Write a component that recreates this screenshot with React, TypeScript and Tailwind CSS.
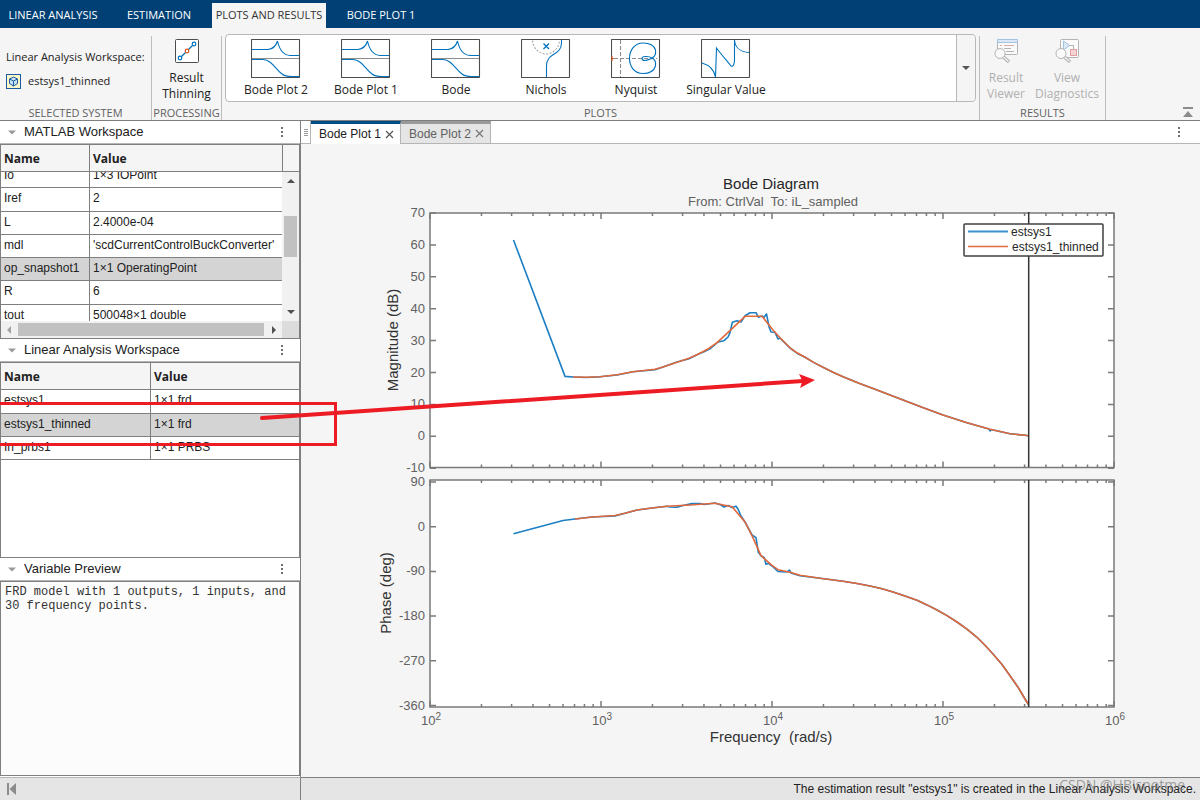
import type { ReactNode } from "react";

type Row = { name: string; value: string; tall?: boolean; selected?: boolean };

const matlabRows: Row[] = [
  { name: "Io", value: "1×3 IOPoint" },
  { name: "Iref", value: "2", tall: true },
  { name: "L", value: "2.4000e-04" },
  { name: "mdl", value: "'scdCurrentControlBuckConverter'" },
  { name: "op_snapshot1", value: "1×1 OperatingPoint", selected: true },
  { name: "R", value: "6", tall: true },
  { name: "tout", value: "500048×1 double" },
];

const linearRows: Row[] = [
  { name: "estsys1", value: "1×1 frd", tall: true },
  { name: "estsys1_thinned", value: "1×1 frd", selected: true },
  { name: "In_prbs1", value: "1×1 PRBS" },
];

const ribbonTabs = [
  { label: "LINEAR ANALYSIS", width: "w-[106px]" },
  { label: "ESTIMATION", width: "w-[106px]" },
  { label: "PLOTS AND RESULTS", width: "w-[114px]", active: true },
  { label: "BODE PLOT 1", width: "w-[110px]" },
];

function Thumb({ children }: { children: ReactNode }) {
  return (
    <svg width="50" height="39" viewBox="0 0 50 39" fill="none" stroke="#0072bd" strokeWidth="1.1">
      <rect x="0.5" y="0.5" width="48" height="38" rx="0.5" fill="#fff" stroke="#4d4d4d" />
      {children}
    </svg>
  );
}

const bodeThumb = (
  <Thumb>
    <path d="M1 19.5H48" stroke="#8c8c8c" />
    <path d="M1 10.5H17C22 10 25 7 26.5 2C28 9 31 16 39 16.5H48" />
    <path d="M1 20.5H12C21 21 24 30 31 35C34 37.5 37 37.5 41 37.5H48" />
  </Thumb>
);

const gallery = [
  { label: "Bode Plot 2", icon: bodeThumb },
  { label: "Bode Plot 1", icon: bodeThumb },
  { label: "Bode", icon: bodeThumb },
  {
    label: "Nichols",
    icon: (
      <Thumb>
        <path d="M11.5 1.5C12 9 18 15 25 15C32 15 38 9 38.5 1.5" stroke="#a6a6a6" strokeDasharray="2 1.5" />
        <path d="M22.5 4.5L28 10M28 4.5L22.5 10" strokeWidth="1.3" />
        <path d="M40.5 1V4C40.5 17 25.5 13 25.5 27V38" />
      </Thumb>
    ),
  },
  {
    label: "Nyquist",
    icon: (
      <Thumb>
        <path d="M9.5 1V38" stroke="#8c8c8c" strokeDasharray="4 2" />
        <path d="M3 19.5H46" stroke="#8c8c8c" strokeDasharray="4 2" />
        <path d="M1 17V22M1 19.5H3" stroke="#d9541a" />
        <path d="M41 19C45 17 45 14 44.5 11C43 6 38 4 32 4C23 4 18.5 12 18.5 19.5C18.5 27 23 34.5 32 34.5C38 34.5 43 32 44.5 27C45 24 45 21 41 19C38 17 36 17.5 34 17.5C30 17.5 30 21.5 34 21.5C36 21.5 39 20 42 19" />
      </Thumb>
    ),
  },
  {
    label: "Singular Value",
    icon: (
      <Thumb>
        <path d="M1 24C8 26 13 30 14.5 38L15.5 9C19 14 26 22 30 27C32 28 33 26 33.5 22V1C34 8 39 13 48 13.5" />
      </Thumb>
    ),
  },
];

function Magnifier() {
  return (
    <>
      <path d="M9.5 18L15 23" stroke="#b3b3b3" strokeWidth="3.5" />
      <path d="M9.5 18L14.5 22.5" stroke="#f5f5f5" strokeWidth="1.2" />
      <circle cx="6" cy="14.5" r="5" fill="#fafafa" stroke="#b3b3b3" />
    </>
  );
}

function Section({ label, className, children }: { label: string; className: string; children: ReactNode }) {
  return (
    <section className={`mt-2 flex h-[84px] flex-col border-r border-[#bdbdbd] ${className}`}>
      <div className="h-[69px]">{children}</div>
      <h2 className="text-center text-[11px] leading-[15px] text-[#616161]">{label}</h2>
    </section>
  );
}

function Kebab() {
  return (
    <button aria-label="Panel actions" className="flex w-4 flex-col items-center gap-[2px]">
      <span className="size-[2px] bg-[#6e6e6e]" />
      <span className="size-[2px] bg-[#6e6e6e]" />
      <span className="size-[2px] bg-[#6e6e6e]" />
    </button>
  );
}

function PanelHeader({ title }: { title: string }) {
  return (
    <div className="flex h-[23px] shrink-0 items-center border-b border-[#b5b5b5] bg-white pr-[10px] pl-2">
      <svg width="8" height="5" viewBox="0 0 8 5" className="mr-2">
        <path d="M0 0.5H8L4 4.5Z" fill="#999" />
      </svg>
      <h2 className="flex-1 text-[13px] leading-4 text-[#212121]">{title}</h2>
      <Kebab />
    </div>
  );
}

function HeadTable({ nameWidth, children }: { nameWidth: string; children?: ReactNode }) {
  return (
    <table className="w-full table-fixed border-separate border-spacing-0 text-left font-['Open_Sans',sans-serif] text-[12px] leading-4 text-[#212121]">
      <thead>
        <tr className="h-[27px] bg-[#f5f5f5]">
          <th className={`border-r border-b border-[#7f7f7f] px-[3px] pt-[2px] pb-0 font-bold ${nameWidth}`}>Name</th>
          <th className="border-b border-[#7f7f7f] px-[3px] pt-[2px] pb-0 font-bold">Value</th>
          {children}
        </tr>
      </thead>
    </table>
  );
}

function BodyTable({ rows, nameWidth }: { rows: Row[]; nameWidth: string }) {
  return (
    <table className="w-full table-fixed border-separate border-spacing-0 bg-white text-[12px] leading-4 text-[#212121]">
      <tbody>
        {rows.map((r) => (
          <tr
            key={r.name}
            className={`align-top ${r.tall ? "h-6" : "h-[23px]"} ${r.selected ? "bg-[#d4d4d4]" : ""}`}
          >
            <td className={`border-r border-b border-[#7f7f7f] px-[3px] pt-[2px] pb-0 ${nameWidth}`}>{r.name}</td>
            <td className="border-b border-[#7f7f7f] px-[3px] pt-[2px] pb-0 whitespace-nowrap">{r.value}</td>
          </tr>
        ))}
      </tbody>
    </table>
  );
}

// chart geometry, in viewBox units
const LEFT = 129;
const RIGHT = 813;
const DECADE = 171;
const decades = [0, 1, 2, 3, 4];
const minorX = [0, 1, 2, 3].flatMap((d) =>
  [2, 3, 4, 5, 6, 7, 8, 9].map((m) => LEFT + DECADE * (d + Math.log10(m)))
);

const magTicks = [70, 60, 50, 40, 30, 20, 10, 0, -10].map((v) => ({ v, y: 69 + ((70 - v) / 10) * 31.9 }));
const phaseTicks = [90, 0, -90, -180, -270, -360].map((v) => ({ v, y: 338 + ((90 - v) / 90) * 44.7 }));

// the thinned result follows the full one everywhere past its last bump
const magTail =
  "504,213.3 513,218.6 522,223.3 532,228.2 542,232.7 558,239.3 574,245.3 604,256.7 623,264 642,271 666,278.7";
const phaseTail =
  "519,434.3 542,437.3 556,439.5 569,442 581,444.8 592,448 604,451.9 616,456.3 626,460.9 636,466 646,471.6 656,478 666,485.2 676,493.3 684,501.2 692,510 701,520.5 709,531.7 717,543.2 724,555 727.5,560.5";

const magThinned = `272,233 285,233.3 299,232.7 316,230.7 332,227.7 343,226.5 354,225.3 362,223 376,218.3 388,214.3 397,210.3 407,205 416,198.7 429,186.7 444,172.3 461,172.3 472,186 479,193.7 489,203.8 496,208.8 ${magTail} 689,285.3 709,289.7 724,291.3 727,291.7`;
const magFull = `212.5,96 264,232.4 272,233 285,233.5 299,232.7 316,231 332,227.7 354,225.7 362,223 376,218 388,214.7 397,210.3 403,207.7 409,204.8 417,198 423,196.7 427,193 429,188.7 431.3,178.3 436,176.7 440,178 444,171.7 449,168.7 455,168.7 457.5,173.3 461,172 463,173.3 465.5,170 468,182.7 470,188 474,188.3 477,195 479,194 489,204 496,209.2 ${magTail} 688,285 689,287 690,285.5 709,289.7 724,291.3 727.5,291.7`;
const phaseThinned = `274,375 291,373 314,371.5 324,369.3 336,366 351,364 366,362.3 389,361 414,359.3 431,362.7 444,378 451,391.7 460,411.7 471,421.3 477,425.7 489,428.3 499,431.3 ${phaseTail}`;
const phaseFull = `212.5,389.8 262,376.5 274,375 291,373 314,372 324,369.3 336,366 351,364 366,362.3 369,363 376,363.3 382,361.5 391,359.6 399,359.6 403,360.5 414,359 420,361 423,363 427,361.5 431,363.5 435,362.3 437,365 440,372 444,378 451,391 455,393.7 457.3,408.3 460,411.7 463.3,413.7 465,420.3 467.5,419.3 471,422 477,427.5 486,428 488.3,426 490,429 499,431.8 ${phaseTail}`;

function Axes({ top, bottom, ticks }: { top: number; bottom: number; ticks: { v: number; y: number }[] }) {
  return (
    <g stroke="#7a7a7a" strokeWidth="1.5" fill="none">
      <rect x={LEFT} y={top} width={RIGHT - LEFT} height={bottom - top} fill="#fff" stroke="none" />
      {ticks.map((t) => (
        <path key={t.v} d={`M${LEFT} ${t.y}h6M${RIGHT} ${t.y}h-6`} />
      ))}
      {decades.map((d) => (
        <path key={d} d={`M${LEFT + DECADE * d} ${top}v6M${LEFT + DECADE * d} ${bottom}v-6`} />
      ))}
      {minorX.map((x) => (
        <path key={x} d={`M${x} ${top}v3M${x} ${bottom}v-3`} />
      ))}
      <rect x={LEFT} y={top} width={RIGHT - LEFT} height={bottom - top} />
      <g fill="#616161" stroke="none" fontSize="13" textAnchor="end">
        {ticks.map((t) => (
          <text key={t.v} x="124" y={t.y + 4}>
            {t.v}
          </text>
        ))}
      </g>
    </g>
  );
}

function BodeChart() {
  return (
    <svg viewBox="0 0 899 633" className="size-full" role="img" aria-label="Bode Diagram">
      <text x="470" y="45" textAnchor="middle" fontSize="15" fill="#262626">
        Bode Diagram
      </text>
      <text x="472" y="62" textAnchor="middle" fontSize="13" fill="#616161" className="whitespace-pre">
        {"From: CtrlVal  To: iL_sampled"}
      </text>
      <Axes top={69} bottom={323.5} ticks={magTicks} />
      <Axes top={336} bottom={563} ticks={phaseTicks} />
      <g fill="none" strokeWidth="1.6" strokeLinejoin="round">
        <polyline points={magFull} stroke="#1c7fc4" />
        <polyline points={magThinned} stroke="#e0683a" />
        <polyline points={phaseFull} stroke="#1c7fc4" />
        <polyline points={phaseThinned} stroke="#e0683a" />
      </g>
      <path d="M727.7 68V323M727.7 336V563" stroke="#333" strokeWidth="1.5" />
      <rect x="663" y="80" width="139" height="32" rx="1" fill="#fff" stroke="#404040" strokeWidth="1.5" />
      <path d="M667 87.5H707" stroke="#3a92cf" strokeWidth="2" />
      <path d="M667 102.5H707" stroke="#e0683a" strokeWidth="1.5" />
      <g fontSize="12" fill="#262626">
        <text x="710" y="92">estsys1</text>
        <text x="711" y="107">estsys1_thinned</text>
      </g>
      <g fontSize="13" fill="#616161">
        {decades.map((d) => (
          <text key={d} x={LEFT - 9 + DECADE * d} y="581">
            10
            <tspan dy="-5" fontSize="10">
              {d + 2}
            </tspan>
          </text>
        ))}
      </g>
      <g fontSize="15" fill="#333" textAnchor="middle">
        <text x="470" y="598" className="whitespace-pre">
          {"Frequency  (rad/s)"}
        </text>
        <text transform="translate(97 196) rotate(-90)">Magnitude (dB)</text>
        <text transform="translate(90 449) rotate(-90)">Phase (deg)</text>
      </g>
    </svg>
  );
}

export default function App() {
  return (
    <div className="relative flex h-screen flex-col overflow-hidden bg-[#f5f5f5] font-['Liberation_Sans',Arial,sans-serif] text-[#212121]">
      <nav className="flex h-7 shrink-0 items-end bg-[#004074] font-['Open_Sans',sans-serif] text-[11px] leading-4">
        {ribbonTabs.map((t) => (
          <button
            key={t.label}
            className={`h-[25px] pb-[2px] whitespace-nowrap ${t.width} ${t.active ? "bg-[#f5f5f5] text-[#333]" : "text-white"}`}
          >
            {t.label}
          </button>
        ))}
      </nav>

      <div className="flex h-[93px] shrink-0 border-b border-[#7f7f7f] font-['Open_Sans',sans-serif] text-[12px] leading-4">
        <Section label="SELECTED SYSTEM" className="w-[152px] shrink-0">
          <div className="flex flex-col gap-2 pt-[13px] pl-[6px] text-[11px] text-[#212121]">
            <p className="whitespace-nowrap">Linear Analysis Workspace:</p>
            <div className="flex items-center gap-[7px]">
              <svg width="15" height="15" viewBox="0 0 15 15" fill="none" stroke="#1a5aa0">
                <rect x="0.5" y="0.5" width="14" height="14" fill="#fdf7c8" />
                <path d="M7.5 3L11.5 5V9.5L7.5 12L3.5 9.5V5Z" fill="#c9e2f7" />
                <path d="M3.5 5L7.5 7L11.5 5M7.5 7V12" />
              </svg>
              <span>estsys1_thinned</span>
            </div>
          </div>
        </Section>

        <Section label="PROCESSING" className="w-[70px] shrink-0">
          <button className="flex w-full flex-col items-center pt-[3px] text-[#212121]">
            <svg width="24" height="24" viewBox="0 0 24 24" fill="none" stroke="#0072bd" className="mb-[7px]">
              <rect x="0.5" y="0.5" width="23" height="23" rx="1" fill="#fff" stroke="#4d4d4d" />
              <path d="M6.5 17.5L10.5 13.5M13.5 10.5L17.5 6.5" strokeWidth="1.3" />
              <circle cx="5" cy="19" r="1.8" strokeWidth="1.2" />
              <circle cx="12" cy="12" r="1.8" stroke="#d9541a" strokeWidth="1.2" />
              <circle cx="19" cy="5" r="1.8" strokeWidth="1.2" />
            </svg>
            <span>Result</span>
            <span>Thinning</span>
          </button>
        </Section>

        <Section label="PLOTS" className="min-w-0 flex-1">
          <div className="-mt-[2px] mr-[3px] ml-[3px] flex h-[68px] rounded-sm border border-[#b8b8b8] bg-white">
            <div className="flex min-w-0 flex-1 overflow-hidden pl-[5px]">
              {gallery.map((g) => (
                <button key={g.label} className="flex w-[90px] shrink-0 flex-col items-center gap-1 pt-1 whitespace-nowrap">
                  {g.icon}
                  <span>{g.label}</span>
                </button>
              ))}
            </div>
            <button
              aria-label="More plots"
              className="flex w-[19px] items-center justify-center rounded-r-sm border-l border-[#b8b8b8] bg-[#f5f5f5]"
            >
              <svg width="8" height="4" viewBox="0 0 8 4">
                <path d="M0 0H8L4 4Z" fill="#555" />
              </svg>
            </button>
          </div>
        </Section>

        <Section label="RESULTS" className="w-[126px] shrink-0">
          <div className="flex text-[#b0b0b0]">
            <button disabled className="flex w-[52px] flex-col items-center pt-[3px]">
              <svg width="24" height="24" viewBox="0 0 24 24" fill="none" className="mb-[7px]">
                <rect x="3.5" y="0.5" width="20" height="15" rx="1" fill="#fafafa" stroke="#b3b3b3" />
                <path d="M3.5 0.5H23.5V3.5H3.5Z" fill="#dbe9f6" stroke="#a3c1e0" />
                <path d="M6 6.5H8M10 6.5H20" stroke="#dba9a9" />
                <path d="M10 9.5H17M12 12.5H20" stroke="#b3b3b3" />
                <Magnifier />
              </svg>
              <span>Result</span>
              <span>Viewer</span>
            </button>
            <button disabled className="flex w-[70px] flex-col items-center pt-[3px]">
              <svg width="24" height="24" viewBox="0 0 24 24" fill="none" className="mb-[7px]">
                <rect x="5.5" y="0.5" width="18" height="18" rx="1" fill="#fafafa" stroke="#b3b3b3" />
                <path d="M14 6.5H18.5V10" stroke="#b3b3b3" />
                <path d="M8.5 2V11L14.5 6.5Z" fill="#dbe9f6" stroke="#a3c1e0" />
                <rect x="15.5" y="10.5" width="6" height="6" fill="#f6d3d3" stroke="#e0a0a0" />
                <Magnifier />
              </svg>
              <span>View</span>
              <span>Diagnostics</span>
            </button>
          </div>
        </Section>

        <div className="flex w-[94px] shrink-0 items-end justify-end pr-[7px] pb-[2px]">
          <button aria-label="Collapse toolstrip">
            <svg width="10" height="11" viewBox="0 0 10 11" fill="#8c8c8c">
              <path d="M0 0H10V2H0ZM5 4L10 10H0Z" />
            </svg>
          </button>
        </div>
      </div>

      <div className="flex min-h-0 flex-1">
        <aside className="flex w-[301px] shrink-0 flex-col border-r border-[#7f7f7f] bg-white">
          <PanelHeader title="MATLAB Workspace" />
          <div className="flex h-[195px] shrink-0 flex-col border border-[#7f7f7f]">
            <HeadTable nameWidth="w-[89px]">
              <th aria-label="Scroll" className="w-[17px] border-b border-l border-[#7f7f7f] p-0" />
            </HeadTable>
            <div className="flex min-h-0 flex-1">
              <div className="min-w-0 flex-1 overflow-hidden">
                <div className="-mt-[7px]">
                  <BodyTable rows={matlabRows} nameWidth="w-[89px]" />
                </div>
              </div>
              <div className="flex w-[17px] flex-col items-center bg-[#f1f1f1] py-[7px]">
                <svg width="8" height="4" viewBox="0 0 8 4">
                  <path d="M0 4H8L4 0Z" fill="#505050" />
                </svg>
                <div className="mt-[33px] h-[41px] w-[13px] bg-[#c1c1c1]" />
                <svg width="8" height="4" viewBox="0 0 8 4" className="mt-auto">
                  <path d="M0 0H8L4 4Z" fill="#505050" />
                </svg>
              </div>
            </div>
            <div className="flex h-[17px] shrink-0 items-center bg-[#f1f1f1]">
              <svg width="4" height="8" viewBox="0 0 4 8" className="ml-[6px]">
                <path d="M4 0V8L0 4Z" fill="#a3a3a3" />
              </svg>
              <div className="mr-2 ml-[7px] h-[13px] flex-1 bg-[#c1c1c1]" />
              <svg width="4" height="8" viewBox="0 0 4 8" className="mr-[6px]">
                <path d="M0 0V8L4 4Z" fill="#505050" />
              </svg>
              <div className="h-[17px] w-[17px] bg-[#dcdcdc]" />
            </div>
          </div>

          <PanelHeader title="Linear Analysis Workspace" />
          <div className="h-[196px] shrink-0 border border-[#7f7f7f]">
            <HeadTable nameWidth="w-[150px]" />
            <BodyTable rows={linearRows} nameWidth="w-[150px]" />
          </div>

          <PanelHeader title="Variable Preview" />
          <textarea
            readOnly
            aria-label="Variable Preview"
            className="mb-[1px] block w-full flex-1 resize-none border border-[#7f7f7f] bg-[#fcfcfc] px-1 py-[3px] font-['Liberation_Mono',monospace] text-[12px] leading-[14px] text-[#333] outline-none"
            value={"FRD model with 1 outputs, 1 inputs, and\n30 frequency points."}
          />
        </aside>

        <main className="flex min-w-0 flex-1 flex-col">
          <div className="flex h-[23px] shrink-0 bg-white text-[12px] leading-4">
            <div className="flex w-[10px] flex-col items-center justify-center gap-[1px] border-r border-b border-[#b5b5b5]">
              <span className="h-[1px] w-1 bg-[#999]" />
              <span className="h-[1px] w-1 bg-[#999]" />
              <span className="h-[1px] w-1 bg-[#999]" />
              <span className="h-[1px] w-1 bg-[#999]" />
            </div>
            <button className="flex w-[90px] items-center gap-1 border-t-3 border-r border-t-[#004c87] border-r-[#b5b5b5] pl-2 text-[#212121]">
              <span>Bode Plot 1</span>
              <svg width="9" height="9" viewBox="0 0 9 9" stroke="#555" strokeWidth="1.2">
                <path d="M1 1L8 8M8 1L1 8" />
              </svg>
            </button>
            <button className="flex w-[90px] items-center gap-1 border-t-3 border-r border-b border-[#b5b5b5] border-t-[#999] bg-[#e5e5e5] pl-2 text-[#616161]">
              <span>Bode Plot 2</span>
              <svg width="9" height="9" viewBox="0 0 9 9" stroke="#777" strokeWidth="1.2">
                <path d="M1 1L8 8M8 1L1 8" />
              </svg>
            </button>
            <div className="flex flex-1 items-center justify-end border-b border-[#b5b5b5] pr-[13px]">
              <Kebab />
            </div>
          </div>
          <div className="min-h-0 flex-1">
            <BodeChart />
          </div>
        </main>
      </div>

      <footer className="flex h-[23px] shrink-0 bg-[#e5e5e5]">
        <div className="flex w-[301px] items-center border-t border-r border-t-[#b5b5b5] border-r-[#7f7f7f] pl-[7px]">
          <button aria-label="Collapse panels">
            <svg width="9" height="12" viewBox="0 0 9 12" fill="#8c8c8c">
              <path d="M0 0H2V12H0ZM9 0V12L2.5 6Z" />
            </svg>
          </button>
        </div>
        <p className="flex-1 border-t border-[#7f7f7f] pt-[3px] pr-1 text-right text-[12px] leading-4 whitespace-nowrap">
          The estimation result "estsys1" is created in the Linear Analysis Workspace.
        </p>
      </footer>

      <span className="absolute right-[15px] bottom-[5px] font-['Open_Sans',sans-serif] text-[14px] leading-5 text-[#787878]/70">
        CSDN @HBisnotme
      </span>

      {/* callout from the selected row to its curve */}
      <svg
        viewBox="0 0 1200 800"
        preserveAspectRatio="xMinYMin meet"
        className="pointer-events-none absolute inset-0 size-full"
        fill="none"
        stroke="#ed1c24"
      >
        <path d="M0 403.5H335.5V444.5H0" strokeWidth="3" />
        <path d="M262 418L803 381" strokeWidth="4" strokeLinecap="round" />
        <path d="M815 380L799 374L802.500 381L800 388Z" fill="#ed1c24" stroke="none" />
      </svg>
    </div>
  );
}
